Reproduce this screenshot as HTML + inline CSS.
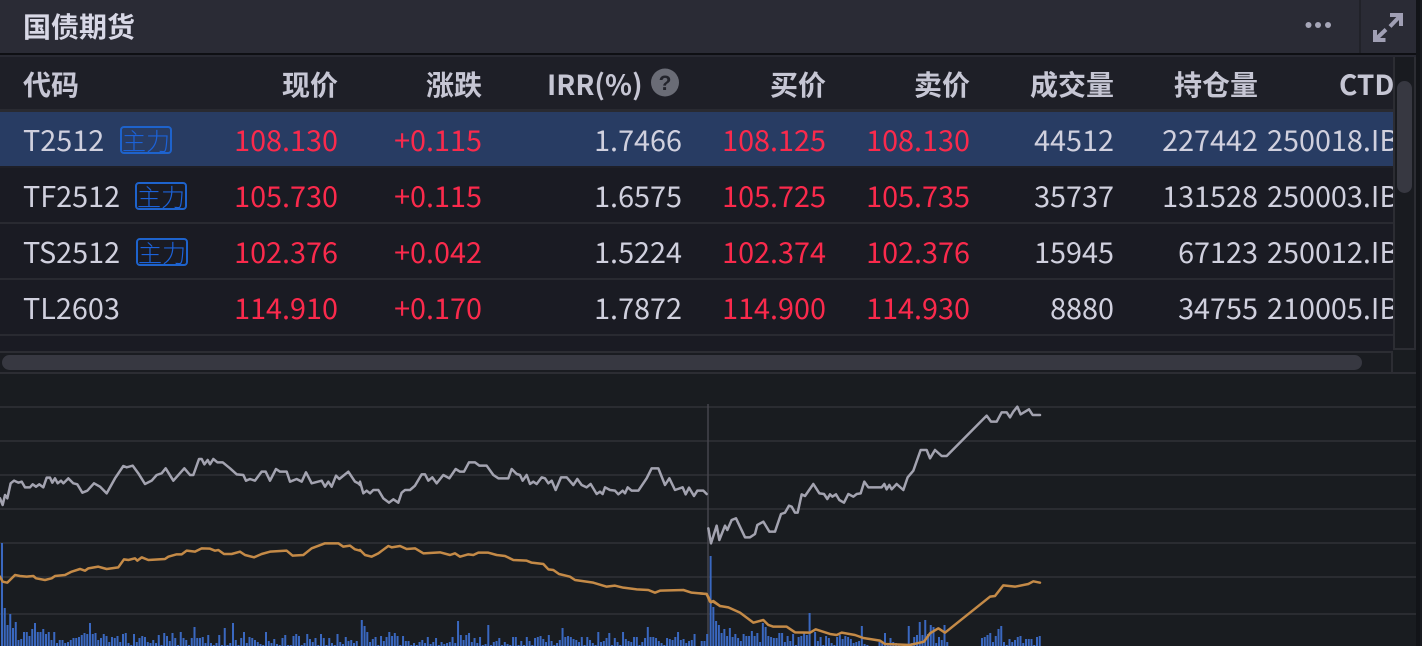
<!DOCTYPE html>
<html><head><meta charset="utf-8"><style>
html,body{margin:0;padding:0;background:#191c20}
#p{position:relative;width:1422px;height:646px;overflow:hidden;background:#191c20;font-family:"Noto Sans CJK SC","Liberation Sans",sans-serif}
.a{position:absolute}
.t{position:absolute;white-space:nowrap;line-height:56px;font-size:28.8px;color:#d0d0de}
.r{text-align:right;width:200px}
.red{color:#fa2a4c}
.h{font-weight:bold;font-size:28px;color:#c6c6d4;top:57px;line-height:54px}
.b{position:absolute;width:48px;height:24px;border:2px solid #1e63cc;border-radius:4px;color:#1c62d8;font-size:24px;line-height:24px;text-align:center;white-space:nowrap;font-family:"Noto Sans CJK SC",sans-serif;font-weight:300}
</style></head><body><div id="p">
<div class="a" style="left:0;top:0;width:1416px;height:53px;background:#2a2b35"></div>
<div class="a" style="left:0;top:53px;width:1416px;height:2px;background:#0e0f13"></div>
<div class="a" style="left:1359px;top:0;width:2px;height:53px;background:#212229"></div>
<div class="a" style="left:0;top:55px;width:1416px;height:2px;background:#282932"></div>
<div class="a" style="left:0;top:57px;width:1393px;height:52px;background:#1e1f27"></div>
<div class="a" style="left:0;top:109px;width:1393px;height:3px;background:#292a31"></div>
<div class="a" style="left:0;top:112px;width:1393px;height:54px;background:#283c63"></div>
<div class="a" style="left:0;top:166px;width:1393px;height:170px;background:#1a1b23"></div>
<div class="a" style="left:0;top:166px;width:1393px;height:2px;background:#1e1f27"></div>
<div class="a" style="left:0;top:222px;width:1393px;height:2px;background:#292a31"></div>
<div class="a" style="left:0;top:278px;width:1393px;height:2px;background:#292a31"></div>
<div class="a" style="left:0;top:334px;width:1393px;height:2px;background:#292a31"></div>
<div class="a" style="left:0;top:336px;width:1393px;height:15px;background:#1a1b23"></div>
<div class="a" style="left:0;top:351px;width:1392px;height:2px;background:#2c2d33"></div>
<div class="a" style="left:0;top:372px;width:1416px;height:2px;background:#2c2d33"></div>
<div class="a" style="left:0;top:353px;width:1392px;height:19px;background:#1a1c21"></div>
<div class="a" style="left:2px;top:355px;width:1360px;height:15px;border-radius:8px;background:#373841"></div>
<div class="a" style="left:1391px;top:351px;width:2px;height:21px;background:#2c2d33"></div>
<div class="a" style="left:1393px;top:57px;width:23px;height:293px;background:#191b20;box-sizing:border-box;border:2px solid #2c2d33;border-top:0"></div>
<div class="a" style="left:1397px;top:81px;width:15px;height:112px;border-radius:8px;background:#373841"></div>
<div class="a" style="left:1416px;top:0;width:4px;height:646px;background:#121418"></div>
<div class="a" style="left:1420px;top:0;width:2px;height:646px;background:#191b20"></div>

<div class="t" style="left:23px;top:0;line-height:53px;font-size:28px;font-weight:bold;color:#d8d8e6">国债期货</div>
<svg class="a" style="left:0;top:0" width="1422" height="110">
<circle cx="1308.5" cy="25" r="3" fill="#a6a6b8"/><circle cx="1318" cy="25" r="3" fill="#a6a6b8"/><circle cx="1328" cy="25" r="3" fill="#a6a6b8"/>
<g fill="none" stroke="#a09fb4" stroke-width="4">
<path d="M1390 15H1401V26"/><path d="M1400.500 15.500L1390 26.500"/>
<path d="M1375 30V40H1385.500"/><path d="M1375.500 39.500L1386 29.500"/>
</g>
<circle cx="665" cy="82.500" r="14" fill="#6a6c76"/>
<text x="665" y="90" font-size="21" font-weight="bold" text-anchor="middle" fill="#23242c" font-family="Liberation Sans">?</text>
</svg>

<div class="t h" style="left:23px">代码</div>
<div class="t h r" style="left:138px">现价</div>
<div class="t h r" style="left:282px">涨跌</div>
<div class="t h" style="left:547px">IRR(%)</div>
<div class="t h r" style="left:626px">买价</div>
<div class="t h r" style="left:770px">卖价</div>
<div class="t h r" style="left:914px">成交量</div>
<div class="t h r" style="left:1058px">持仓量</div>
<div class="a" style="left:1339px;top:57px;width:54px;height:52px;overflow:hidden"><div class="t h" style="left:0;top:0;line-height:54px">CTD</div></div>

<div class="t" style="left:23px;top:112px">T2512</div><div class="b" style="left:120px;top:126px">主力</div>
<div class="t r red" style="left:138px;top:112px">108.130</div><div class="t r red" style="left:282px;top:112px">+0.115</div><div class="t r" style="left:482px;top:112px">1.7466</div><div class="t r red" style="left:626px;top:112px">108.125</div><div class="t r red" style="left:770px;top:112px">108.130</div><div class="t r" style="left:914px;top:112px">44512</div><div class="t r" style="left:1058px;top:112px">227442</div>
<div class="t" style="left:23px;top:168px">TF2512</div><div class="b" style="left:135px;top:182px">主力</div>
<div class="t r red" style="left:138px;top:168px">105.730</div><div class="t r red" style="left:282px;top:168px">+0.115</div><div class="t r" style="left:482px;top:168px">1.6575</div><div class="t r red" style="left:626px;top:168px">105.725</div><div class="t r red" style="left:770px;top:168px">105.735</div><div class="t r" style="left:914px;top:168px">35737</div><div class="t r" style="left:1058px;top:168px">131528</div>
<div class="t" style="left:23px;top:224px">TS2512</div><div class="b" style="left:136px;top:238px">主力</div>
<div class="t r red" style="left:138px;top:224px">102.376</div><div class="t r red" style="left:282px;top:224px">+0.042</div><div class="t r" style="left:482px;top:224px">1.5224</div><div class="t r red" style="left:626px;top:224px">102.374</div><div class="t r red" style="left:770px;top:224px">102.376</div><div class="t r" style="left:914px;top:224px">15945</div><div class="t r" style="left:1058px;top:224px">67123</div>
<div class="t" style="left:23px;top:280px">TL2603</div>
<div class="t r red" style="left:138px;top:280px">114.910</div><div class="t r red" style="left:282px;top:280px">+0.170</div><div class="t r" style="left:482px;top:280px">1.7872</div><div class="t r red" style="left:626px;top:280px">114.900</div><div class="t r red" style="left:770px;top:280px">114.930</div><div class="t r" style="left:914px;top:280px">8880</div><div class="t r" style="left:1058px;top:280px">34755</div>
<div class="a" style="left:1267px;top:112px;width:126px;height:224px;overflow:hidden">
<div class="t" style="left:0;top:0">250018.IB</div><div class="t" style="left:0;top:56px">250003.IB</div><div class="t" style="left:0;top:112px">250012.IB</div><div class="t" style="left:0;top:168px">210005.IB</div>
</div>

<svg class="a" style="left:0;top:0" width="1416" height="646">
<g fill="none" stroke="#2a2c31" stroke-width="2">
<path d="M0 407H1416M0 441H1416M0 475H1416M0 509H1416M0 543H1416M0 577H1416M0 614H1416"/>
</g>
<path d="M708 404V646" stroke="#44454c" stroke-width="1.500" fill="none"/>
<path fill="#3a68c0" d="M1 646v-103h2V646h.75v-38h2V646h.75v-21h2V646h.75v-32h2V646h.75v-18h2V646h.75v-24h2V646h.75v-6h2V646h.75v-7h2V646h.75v-14h2V646h.75v-14h2V646h.75v-10h2V646h.75v-17h2V646h.75v-23h2V646h.75v-14h2V646h.75v-14h2V646h.75v-17h2V646h.75v-12h2V646h.75v-14h2V646h.75v-6h2V646h.75v-14h2V646h.75v-3h2V646h.75v-6h2V646h.75v-6h2V646h.75v-3h2V646h.75v-4h2V646h.75v-6h2V646h.75v-8h2V646h.75v-8h2V646h.75v-9h2V646h.75v-11h2V646h.75v-13h2V646h.75v-12h2V646h.75v-23h2V646h.75v-12h2V646h.75v-13h2V646h.75v-6h2V646h.75v-8h2V646h.75v-12h2V646h.75v-10h2V646h.75v-4h2V646h.75v-9h2V646h.75v-8h2V646h.75v-10h2V646h.75v-4h2V646h.75v-12h2V646h.75v-13h2V646h.75v-3h2V646h.75v-1h2V646h.75v-12h2V646h.75v-4h2V646h.75v-8h2V646h.75v-10h2V646h.75v-9h2V646h.75v-4h2V646h.75v-3h2V646h.75v-6h2V646h.75v-3h2V646h.75v-11h2V646h.75v-1h2V646h.75v-13h2V646h.75v-10h2V646h.75v-5h2V646h.75v-13h2V646h.75v-8h2V646h.75v-1h2V646h.75v-14h2V646h.75v-8h2V646h.75v-6h2V646h.75v-1h2V646h.75v-8h2V646h.75v-19h2V646h.75v-8h2V646h.75v-8h2V646h.75v-9h2V646h.75v-3h2V646h.75v-11h2V646h.75v-3h2V646h.75v-1h2V646h.75v-3h2V646h.75v-11h2V646h.75v-1h2V646h.75v-18h2V646h.75v-1h2V646h.75v-3h2V646h.75v-23h2V646h.75v-6h2V646h.75v-1h2V646h.75v-8h2V646h.75v-14h2V646h.75v-3h2V646h.75v-9h2V646h.75v-8h2V646h.75v-6h2V646h.75v-4h2V646h.75v-2h2V646h.75v-1h2V646h.75v-14h2V646h.75v-5h2V646h.75v-3h2V646h.75v-7h2V646h.75v-2h2V646h.75v-1h2V646h.75v-8h2V646h.75v-11h2V646h.75v-1h2V646h.75v-1h2V646h.75v-10h2V646h.75v-12h2V646h.75v-10h2V646h.75v-1h2V646h.75v-3h2V646h.75v-12h2V646h.75v-7h2V646h.75v-4h2V646h.75v-8h2V646h.75v-1h2V646h.75v-12h2V646h.75v-8h2V646h.75v-1h2V646h.75v-8h2V646h.75v-3h2V646h.75v-1h2V646h.75v-12h2V646h.75v-4h2V646h.75v-2h2V646h.75v-9h2V646h.75v-5h2V646h.75v-6h2V646h.75v-3h2V646h.75v-5h2V646"/>
<path fill="#3a68c0" d="M360.800 646v-26h2V646h.75v-20h2V646h.75v-14h2V646h.75v-4h2V646h.75v-7h2V646h.75v-9h2V646h.75v-1h2V646h.75v-10h2V646h.75v-5h2V646h.75v-9h2V646h.75v-14h2V646h.75v-10h2V646h.75v-13h2V646h.75v-10h2V646h.75v-1h2V646h.75v-10h2V646h.75v-5h2V646h.75v-5h2V646h.75v-1h2V646h.75v-3h2V646h.75v-1h2V646h.75v-4h2V646h.75v-6h2V646h.75v-3h2V646h.75v-9h2V646h.75v-2h2V646h.75v-4h2V646h.75v-8h2V646h.75v-1h2V646h.75v-4h2V646h.75v-2h2V646h.75v-3h2V646h.75v-4h2V646h.75v-9h2V646h.75v-3h2V646h.75v-25h2V646h.75v-11h2V646h.75v-6h2V646h.75v-11h2V646h.75v-13h2V646h.75v-4h2V646h.75v-8h2V646h.75v-3h2V646h.75v-9h2V646h.75v-1h2V646h.75v-2h2V646h.75v-21h2V646h.75v-1h2V646h.75v-4h2V646h.75v-5h2V646h.75v-8h2V646h.75v-1h2V646h.75v-4h2V646h.75v-2h2V646h.75v-1h2V646h.75v-9h2V646h.75v-9h2V646h.75v-1h2V646h.75v-5h2V646h.75v-1h2V646h.75v-9h2V646h.75v-5h2V646h.75v-1h2V646h.75v-8h2V646h.75v-9h2V646h.75v-10h2V646h.75v-7h2V646h.75v-4h2V646h.75v-11h2V646h.75v-5h2V646h.75v-1h2V646h.75v-3h2V646h.75v-6h2V646h.75v-18h2V646h.75v-9h2V646h.75v-10h2V646h.75v-9h2V646h.75v-7h2V646h.75v-6h2V646h.75v-4h2V646h.75v-9h2V646h.75v-1h2V646h.75v-9h2V646h.75v-6h2V646h.75v-3h2V646h.75v-1h2V646h.75v-14h2V646h.75v-4h2V646h.75v-5h2V646h.75v-8h2V646h.75v-13h2V646h.75v-1h2V646h.75v-8h2V646h.75v-4h2V646h.75v-1h2V646h.75v-14h2V646h.75v-7h2V646h.75v-5h2V646h.75v-4h2V646h.75v-9h2V646h.75v-9h2V646h.75v-1h2V646h.75v-4h2V646h.75v-8h2V646h.75v-19h2V646h.75v-9h2V646h.75v-9h2V646h.75v-8h2V646h.75v-5h2V646h.75v-3h2V646h.75v-1h2V646h.75v-8h2V646h.75v-7h2V646h.75v-6h2V646h.75v-9h2V646h.75v-14h2V646h.75v-6h2V646h.75v-7h2V646h.75v-3h2V646h.75v-5h2V646h.75v-6h2V646h.75v-12h2V646"/>
<path fill="#3a68c0" d="M700.700 646v-5h2V646h.75v-5h2V646h.75v-12h2V646h1.400v-90h2V646h.75v-39h2V646h.75v-25h2V646h.75v-21h2V646h.75v-13h2V646h.75v-17h2V646h.75v-10h2V646h.75v-18h2V646h.75v-9h2V646h.75v-12h2V646h.75v-8h2V646h.75v-5h2V646h.75v-12h2V646h.75v-10h2V646h.75v-10h2V646h.75v-15h2V646h.75v-10h2V646h.75v-13h2V646h.75v-4h2V646h.75v-23h2V646h.75v-19h2V646h.75v-10h2V646h.75v-9h2V646h.75v-8h2V646h.75v-8h2V646h.75v-13h2V646h.75v-13h2V646h.75v-4h2V646h.75v-10h2V646h.75v-5h2V646h.75v-12h2V646h.75v-1h2V646h.75v-9h2V646h.75v-10h2V646h.75v-13h2V646h.75v-11h2V646h.75v-33h2V646h3.500v-14h2V646h.75v-5h2V646h.75v-9h2V646h.75v-1h2V646h.75v-10h2V646h.75v-8h2V646h.75v-3h2V646h.75v-1h2V646h.75v-9h2V646h.75v-11h2V646h.75v-7h2V646h.75v-10h2V646h.75v-9h2V646h.75v-7h2V646h.75v-3h2V646h.75v-4h2V646h.75v-5h2V646h.75v-20h2V646h.75v-2h2V646h.75v-1h2V646"/>
<path fill="#3a68c0" d="M878.500 646v-4h2V646h.75v-3h2V646h.75v-13h2V646h.75v-2h2V646h.75v-8h2V646h.75v-4h2V646h.75v-3h2V646h.75v-2h2V646h8v-20h2V646h.75v-3h2V646h.75v-9h2V646h.75v-11h2V646h.75v-24h2V646h.75v-11h2V646h.75v-26h2V646h.75v-12h2V646h.75v-21h2V646h.75v-19h2V646h.75v-3h2V646h.75v-9h2V646h.75v-6h2V646h.75v-21h2V646h.75v-4h2V646"/>
<path fill="#3a68c0" d="M981 646v-8h2V646h.75v-9h2V646h.75v-11h2V646h.75v-13h2V646h.75v-4h2V646h.75v-10h2V646h.75v-17h2V646h.75v-20h2V646h.75v-4h2V646h.75v-1h2V646h.75v-7h2V646h.75v-4h2V646h.75v-6h2V646h.75v-9h2V646h.75v-10h2V646h.75v-3h2V646h.75v-7h2V646h.75v-7h2V646h.75v-7h2V646h.75v-1h2V646h.75v-9h2V646h.75v-10h2V646"/>

<g fill="none" stroke-width="7.500" stroke-linejoin="round" stroke-linecap="round">
<g transform="translate(0,330) scale(.33333)">
<polyline stroke="#a3a3b0" points="0,505 8,525 15,495 22,505 32,460 42,452 55,458 65,455 75,472 90,472 98,463 108,470 118,463 130,472 140,443 150,443 157,458 165,445 173,460 183,452 190,460 205,445 220,460 232,463 247,488 262,482 282,460 300,470 320,490 345,445 370,408 380,412 398,407 415,430 435,462 455,452 470,435 485,430 497,415 520,452 553,415 570,435 580,435 597,387 605,387 613,403 623,390 630,403 640,387 652,397 668,397 690,415 710,433 730,435 738,452 750,447 765,452 785,425 797,425 810,452 828,417 840,425 860,425 870,455 890,447 905,455 918,427 935,460 965,452 975,470 985,455 995,470 1008,437 1018,447 1045,425 1065,455 1075,460 1080,465"/>
<polyline stroke="#c48a47" points="0,740 8,755 22,758 45,735 60,738 80,740 100,738 108,745 135,750 155,745 165,738 195,735 215,725 240,717 255,722 265,715 295,710 320,717 355,712 372,688 385,690 405,685 412,692 425,682 445,690 495,687 505,680 530,673 545,673 560,662 585,665 605,655 630,656 645,662 655,660 672,672 695,672 720,665 735,675 762,682 785,672 810,665 860,662 878,677 910,675 935,655 975,640 1015,640 1030,650 1050,647 1065,658 1080,662"/>
</g>
<g transform="translate(360,400) scale(.33333)">
<polyline stroke="#a3a3b0" points="0,245 10,280 20,272 30,280 40,270 55,270 70,295 87,308 100,298 115,308 125,278 135,270 150,270 165,257 185,223 195,223 205,242 217,232 230,250 250,225 268,235 287,207 300,215 312,215 327,187 345,187 358,197 380,197 400,225 415,235 445,235 455,207 470,222 480,225 488,242 500,225 510,252 520,245 530,252 545,232 555,235 565,250 575,242 587,270 603,232 620,232 640,255 652,237 665,255 680,262 692,252 710,282 720,275 728,282 735,262 750,270 765,272 775,283 788,272 795,280 803,262 815,272 835,272 860,235 875,205 895,205 915,255 928,235 945,270 968,262 977,283 987,263 1002,288 1012,272 1030,272 1040,282"/>
<polyline stroke="#c48a47" points="0,450 15,465 35,470 55,460 85,438 95,442 120,438 140,447 165,445 190,460 240,457 270,465 285,460 300,470 325,463 340,465 355,458 385,458 410,465 435,468 460,480 500,482 515,488 550,492 565,508 580,510 597,522 630,530 645,540 700,548 740,560 765,557 790,563 830,568 865,570 885,578 900,572 970,570 995,578 1040,582 1050,605 1060,605 1080,618"/>
</g>
<g transform="translate(700,400) scale(.33333)">
<polyline stroke="#a3a3b0" points="25,385 33,430 50,377 58,420 75,377 82,390 95,360 108,355 135,412 150,412 165,402 172,375 190,365 208,395 225,395 243,342 255,338 267,317 275,320 285,338 293,338 305,283 315,288 340,252 358,280 372,282 382,297 390,283 397,290 408,283 418,300 432,308 445,282 460,290 470,282 482,280 493,245 505,262 545,262 553,252 560,268 568,255 575,268 590,252 610,270 623,232 640,212 662,150 680,150 690,175 705,150 725,168 740,168 860,47 873,65 890,65 905,37 920,37 930,52 940,35 952,20 962,43 987,28 998,45 1020,45"/>
<polyline stroke="#c48a47" points="0,580 20,582 33,607 40,603 60,618 85,622 120,638 160,668 190,660 205,675 220,680 260,680 285,697 330,698 347,688 390,702 410,705 425,698 465,705 490,714 540,722 555,732 630,735 672,725 690,700 715,685 735,698 870,590 885,588 910,556 945,560 985,552 1000,544 1020,548"/>
</g>
</g>
</svg>
</div></body></html>
